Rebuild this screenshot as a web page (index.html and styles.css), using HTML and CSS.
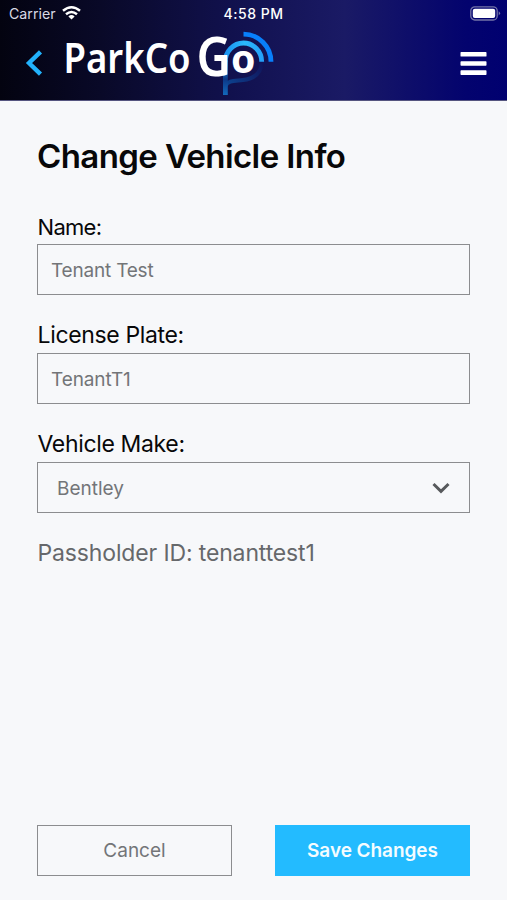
FILE: index.html
```html
<!DOCTYPE html>
<html lang="en">
<head>
<meta charset="utf-8">
<title>Change Vehicle Info</title>
<link rel="stylesheet" href="styles.css">
</head>
<body>
<header class="header">
  <div class="status">
    <div class="carrier"><span>Carrier</span>
      <svg width="19" height="14" viewBox="0 0 19 14" fill="none" stroke="#fff" stroke-width="2.5"><path d="M1 4.8Q9.5-2.2 18 4.8M4 8.3Q9.5 3.8 15 8.3"/><path d="M9.5 13.5L6.4 10.4Q9.5 7.8 12.6 10.4Z" fill="#fff" stroke="none"/></svg>
    </div>
    <div class="clock">4:58 PM</div>
    <svg class="battery" width="31" height="15" viewBox="0 0 31 15"><rect x=".8" y=".8" width="26.4" height="13.2" rx="4" fill="none" stroke="#7474a8" stroke-width="1.3"/><rect x="2.8" y="2.8" width="22.4" height="9.2" rx="2" fill="#fff"/><path d="M28.7 5.2Q31.5 7.3 28.7 9.6Z" fill="#7474a8"/></svg>
  </div>
  <div class="bar">
    <svg class="back" width="18" height="28" viewBox="0 0 18 28" fill="none" stroke="#22b2fc" stroke-width="4.4"><path d="M15.5 2.8L4 14L15.5 25.2"/></svg>
    <svg class="logo" width="216" height="70" viewBox="62 28 216 70">
      <defs>
        <linearGradient id="stem" x1="0" y1="60" x2="0" y2="95" gradientUnits="userSpaceOnUse"><stop offset="0" stop-color="#27aefa"/><stop offset=".55" stop-color="#0c3888"/><stop offset="1" stop-color="#1269bb"/></linearGradient>
        <linearGradient id="bowl" x1="228" y1="86" x2="262" y2="62" gradientUnits="userSpaceOnUse"><stop offset="0" stop-color="#0c4390"/><stop offset="1" stop-color="#11145a"/></linearGradient>
        <linearGradient id="wave" x1="226" y1="0" x2="263" y2="0" gradientUnits="userSpaceOnUse"><stop offset="0" stop-color="#1a93f0"/><stop offset=".5" stop-color="#2bbafc"/><stop offset="1" stop-color="#259ffa"/></linearGradient>
      </defs>
      <path d="M225.4 86C228 80 235 81 243 80Q261 78 261.8 62" fill="none" stroke="url(#bowl)" stroke-width="4"/>
      <path d="M225.4 60V95" fill="none" stroke="url(#stem)" stroke-width="4.8"/>
      <path d="M225.3 61.8A18.2 18.8 0 0 1 261.7 61.8" fill="none" stroke="url(#wave)" stroke-width="4.8"/>
      <path d="M243.5 34.2A27.5 27.6 0 0 1 271 61.8" fill="none" stroke="#087ffb" stroke-width="4.8"/>
      <text class="brand" x="63.5" y="72.5" textLength="127" lengthAdjust="spacingAndGlyphs">ParkCo</text>
      <text class="brand-g" x="196.5" y="76.3" textLength="34.5" lengthAdjust="spacingAndGlyphs">G</text>
      <text class="brand-o" x="231" y="72.9" textLength="24.5" lengthAdjust="spacingAndGlyphs">o</text>
    </svg>
    <svg class="menu" width="27" height="24" viewBox="0 0 27 24" fill="#fff"><rect x=".5" width="26" height="4.6" rx=".7"/><rect x=".5" y="9.2" width="26" height="4.6" rx=".7"/><rect x=".5" y="18.3" width="26" height="4.6" rx=".7"/></svg>
  </div>
</header>
<main class="main">
  <h1 class="title">Change Vehicle Info</h1>
  <section class="field"><div class="label name-label">Name:</div><div class="box name">Tenant Test</div></section>
  <section class="field"><div class="label">License Plate:</div><div class="box plate">TenantT1</div></section>
  <section class="field"><div class="label">Vehicle Make:</div><div class="box select"><span>Bentley</span>
    <svg width="20" height="14" viewBox="0 0 20 14" fill="none" stroke="#57595c" stroke-width="3"><path d="M2.5 3L10 10.3L17.5 3"/></svg></div></section>
  <p class="pass">Passholder ID: tenanttest1</p>
  <div class="actions"><div class="button cancel">Cancel</div><div class="button save">Save Changes</div></div>
</main>
</body>
</html>
```
FILE: styles.css
```css
* { box-sizing: border-box; }
body { margin: 0; width: 507px; height: 900px; display: flex; flex-direction: column; overflow: hidden; background: #f7f8fa; font-family: Inter, sans-serif; color: #080809; }
svg { display: block; flex: none; }
.header { height: 101px; flex: none; background: linear-gradient(90deg, #030310 0%, #090928 20%, #11114e 46%, #1a1a65 68%, #03036e 92%, #000070 100%); border-bottom: 1px solid #55557f; }
.status { height: 28px; display: grid; grid-template-columns: 1fr 80px 1fr; align-items: center; color: #fff; }
.carrier { display: flex; align-items: center; gap: 6px; padding-left: 9px; font-size: 14.2px; letter-spacing: 0; color: #d9d9e4; }
.carrier span { margin-top: -2px; }
.carrier svg { margin-top: -2px; }
.clock { margin-top: -2px; font-size: 14px; font-weight: 500; text-align: center; white-space: nowrap; letter-spacing: .5px; }
.battery { justify-self: end; margin: -2px 6px 0 0; }
.bar { height: 70px; display: flex; align-items: flex-start; }
.back { margin: 21px 0 0 25px; }
.logo { margin-left: 19px; overflow: visible; }
.menu { margin: 23.5px 20px 0 auto; }
.brand { font: 600 41px "Noto Sans", sans-serif; fill: #fff; }
.brand-g { font: 600 55px "Noto Sans", sans-serif; fill: #fff; }
.brand-o { font: 700 39px "Noto Sans", sans-serif; fill: #fff; }
.main { flex: 1; display: flex; flex-direction: column; padding: 35px 37px 24px; }
.title { margin: 0 0 33px; font-size: 33px; line-height: 40px; font-weight: 600; letter-spacing: -.6px; white-space: nowrap; }
.field { height: 109px; }
.label { height: 35px; line-height: 35px; font-size: 23px; letter-spacing: -.35px; }
.name-label { font-size: 22px; letter-spacing: -.7px; line-height: 36px; }
.label, .pass { padding-left: .5px; }
.box { height: 51px; border: 1.5px solid #8c8d8f; padding: 2px 13px 0; display: flex; align-items: center; font-size: 19px; color: #737578; }
.name { letter-spacing: -.2px; }
.plate { letter-spacing: -.1px; }
.select { justify-content: space-between; padding: 1px 18px 0 19px; }
.pass { margin: 0; line-height: 34px; font-size: 23px; letter-spacing: -.14px; color: #66686b; white-space: nowrap; }
.actions { margin-top: auto; display: grid; grid-template-columns: 195px 195px; justify-content: space-between; }
.button { height: 51px; display: flex; align-items: center; justify-content: center; font-size: 19px; }
.cancel { border: 1.5px solid #8c8d8f; color: #737578; }
.save { background: #23bbff; color: #f4fcff; font-weight: 600; letter-spacing: -.05px; }
```
